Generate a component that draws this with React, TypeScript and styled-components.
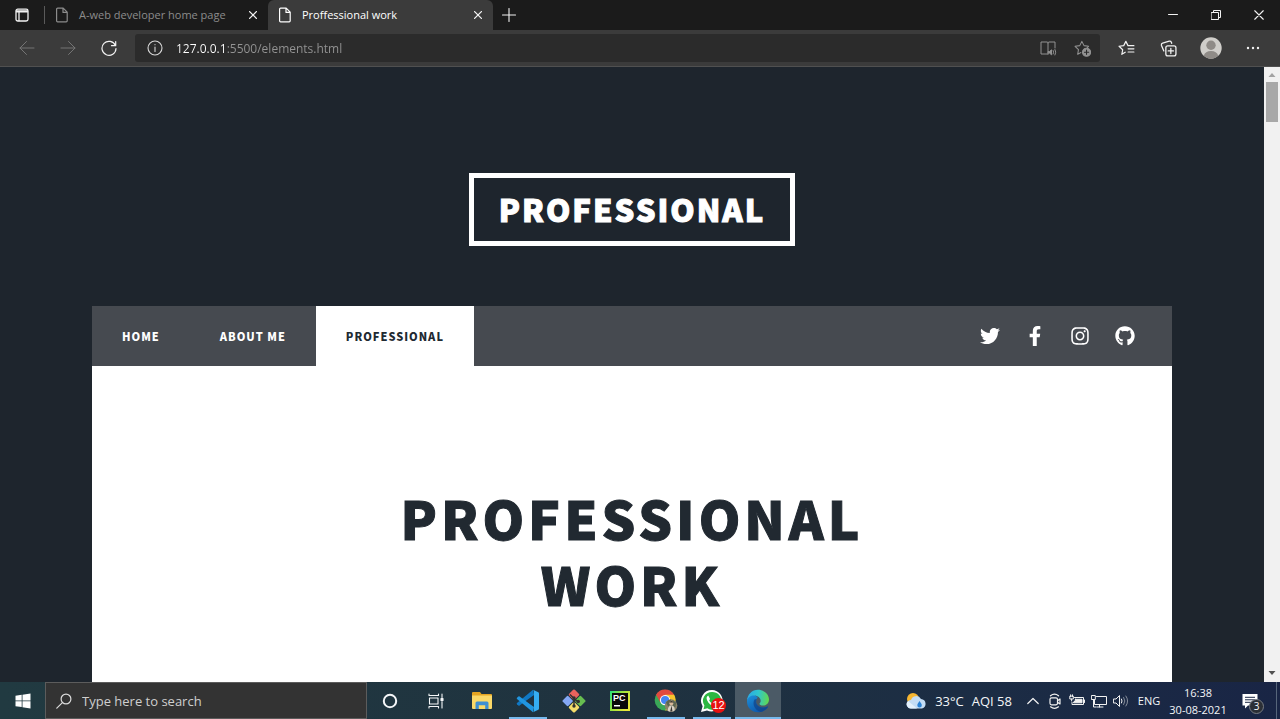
import React from "react";
import styled, { createGlobalStyle } from "styled-components";
import { FaTwitter, FaFacebookF, FaInstagram, FaGithub } from "react-icons/fa";

const GlobalStyle = createGlobalStyle`
  * { box-sizing: border-box; }
  body { margin: 0; background: #1e252d; }
  button, input { font: inherit; color: inherit; border: 0; padding: 0; margin: 0; background: none; }
  svg { display: block; flex: none; }
`;

const ui = `"Open Sans", "Noto Sans", sans-serif`;
const site = `"Noto Sans CJK JP", "Noto Sans CJK SC", sans-serif`;

const Screen = styled.div`
  display: flex;
  flex-direction: column;
  height: 100vh;
  font-family: ${ui};
  overflow: hidden;
`;

/* ---------- browser frame ---------- */

const TitleBar = styled.div`
  display: flex;
  flex: none;
  height: 30px;
  background: #1b1b1b;
  color: #f2f2f2;
`;

const IconButton = styled.button<{ $width: number; $color?: string }>`
  display: flex;
  align-items: center;
  justify-content: center;
  flex: none;
  width: ${(p) => p.$width}px;
  color: ${(p) => p.$color ?? "#f2f2f2"};
`;

const Divider = styled.span`
  width: 1px;
  height: 18px;
  margin-top: 6px;
  background: #5a5a5a;
`;

const Tab = styled.div<{ $active?: boolean }>`
  display: flex;
  align-items: center;
  flex: 0 1 ${(p) => (p.$active ? 225 : 223)}px;
  min-width: 0;
  padding-left: 9px;
  border-radius: 6px 6px 0 0;
  background: ${(p) => (p.$active ? "#3b3b3b" : "transparent")};
  color: ${(p) => (p.$active ? "#ffffff" : "#8c8c8c")};
`;

const TabLabel = styled.button`
  display: flex;
  align-items: center;
  gap: 9px;
  flex: 1;
  font-size: 11px;
  line-height: 16px;
  white-space: nowrap;
`;

const WindowButtons = styled.div`
  display: flex;
  margin-left: auto;
`;

const Toolbar = styled.div`
  display: flex;
  flex: none;
  height: 37px;
  padding: 0 6px;
  background: #3b3b3b;
  border-bottom: 1px solid #505050;
`;

const AddressBar = styled.div`
  display: flex;
  align-items: center;
  flex: 1;
  height: 28px;
  margin: 4px 6px 0;
  padding: 0 0 0 12px;
  border-radius: 3px;
  background: #2b2b2b;
`;

const AddressInput = styled.input`
  flex: 1;
  min-width: 0;
  height: 28px;
  margin-left: 13px;
  font-size: 12px;
  color: transparent;
  caret-color: #ffffff;
  background: linear-gradient(to right, #ffffff 51px, #949494 51px);
  background-clip: text;
  -webkit-background-clip: text;
  outline: none;
`;

/* ---------- web page ---------- */

const Viewport = styled.div`
  display: flex;
  flex: 1;
  min-height: 0;
`;

const Page = styled.div`
  flex: 1;
  min-width: 0;
  overflow: hidden;
  background: #1e252d;
  font-family: ${site};
  font-weight: 900;
`;

const Header = styled.header`
  display: flex;
  justify-content: center;
  padding: 106px 0 60px;
`;

const Logo = styled.a`
  padding: 15px 25px 17px;
  border: 5px solid #ffffff;
  color: #ffffff;
  font-size: 31px;
  line-height: 31px;
  letter-spacing: 2px;
  -webkit-text-stroke: 1px #ffffff;
  text-decoration: none;
`;

const Wrapper = styled.div`
  max-width: 1080px;
  margin: 0 auto;
`;

const Nav = styled.nav`
  display: flex;
  justify-content: space-between;
  height: 60px;
  background: #464a50;
`;

const LinkList = styled.ul`
  display: flex;
  margin: 0;
  padding: 0;
  list-style: none;
`;

const NavLink = styled.a<{ $active?: boolean }>`
  display: block;
  padding: 0 30px;
  font-size: 11px;
  line-height: 60px;
  letter-spacing: 1px;
  text-decoration: none;
  color: ${(p) => (p.$active ? "#212931" : "#ffffff")};
  background: ${(p) => (p.$active ? "#ffffff" : "transparent")};
`;

const SocialList = styled(LinkList)`
  padding-right: 25px;
`;

const SocialLink = styled.a`
  display: flex;
  align-items: center;
  justify-content: center;
  width: 45px;
  height: 60px;
  color: #ffffff;
  font-size: 20px;
`;

const Main = styled.main`
  padding: 118px 30px;
  min-height: 480px;
  background: #ffffff;
`;

const Heading = styled.h1`
  max-width: 540px;
  margin: 0 auto;
  color: #212931;
  font-size: 53px;
  font-weight: 900;
  line-height: 66px;
  letter-spacing: 4px;
  -webkit-text-stroke: 1px #212931;
  text-align: center;
`;

const ScrollTrack = styled.div`
  display: flex;
  flex-direction: column;
  align-items: center;
  flex: none;
  width: 16px;
  padding: 5px 0 6px;
  background: #f1f1f1;
`;

const ScrollThumb = styled.div`
  width: 12px;
  height: 40px;
  margin: 4px 0 auto;
  background: #a8a8a8;
`;

/* ---------- taskbar ---------- */

const Taskbar = styled.div`
  display: flex;
  flex: none;
  height: 37px;
  background: linear-gradient(to right, #213a41, #1f323f 50%, #1c2d44 75%, #192545);
  color: #f4f6f8;
`;

const SearchBox = styled.label`
  display: flex;
  align-items: center;
  gap: 10px;
  flex: 0 1 322px;
  min-width: 0;
  padding-left: 10px;
  border: 1px solid #5c5c5c;
  background: #333333;
  color: #dcdcdc;
`;

const SearchInput = styled.input`
  flex: 1;
  min-width: 0;
  height: 35px;
  font-size: 13px;
  outline: none;
  &::placeholder { color: #cfcfcf; opacity: 1; }
`;

const TaskButton = styled.button<{ $running?: boolean; $active?: boolean }>`
  display: flex;
  align-items: center;
  justify-content: center;
  position: relative;
  flex: none;
  width: 46px;
  background: ${(p) => (p.$active ? "#4b5a66" : "transparent")};
  &::after {
    content: "";
    position: absolute;
    bottom: 0;
    left: ${(p) => (p.$active ? 0 : 4)}px;
    right: ${(p) => (p.$active ? 0 : 4)}px;
    height: 2px;
    background: ${(p) => (p.$running ? "#76b9ed" : "transparent")};
  }
`;

const CountBadge = styled.span`
  position: absolute;
  left: 22px;
  top: 16px;
  width: 15px;
  height: 15px;
  border-radius: 50%;
  background: #e81010;
  color: #ffffff;
  font-family: "Liberation Sans", sans-serif;
  font-size: 11px;
  line-height: 15px;
  text-align: center;
`;

const Tray = styled.div`
  display: flex;
  margin-left: auto;
`;

const Weather = styled.button`
  display: flex;
  align-items: center;
  gap: 8px;
  margin-right: 10px;
  font-size: 13px;
  white-space: nowrap;
`;

const Language = styled.button`
  width: 34px;
  font-size: 11px;
`;

const Clock = styled.button`
  width: 64px;
  font-size: 11px;
  line-height: 17px;
  text-align: center;
  white-space: nowrap;
`;

const Notices = styled.button`
  display: flex;
  align-items: center;
  position: relative;
  width: 47px;
  padding-left: 12px;
  border-right: 1px solid #56657a;
  margin-right: 3px;
`;

const NoticeBadge = styled.span`
  position: absolute;
  left: 19px;
  top: 17px;
  width: 15px;
  height: 15px;
  border: 1px solid #777c84;
  border-radius: 50%;
  background: #2b2f36;
  font-size: 10px;
  line-height: 13px;
  text-align: center;
`;

/* ---------- icons ---------- */

type LineProps = { size: number; box?: string; width?: number; children: React.ReactNode };

const Line = ({ size, box = "0 0 16 16", width = 1, children }: LineProps) => (
  <svg
    width={size}
    height={size}
    viewBox={box}
    fill="none"
    stroke="currentColor"
    strokeWidth={width}
    strokeLinecap="round"
    strokeLinejoin="round"
    aria-hidden="true"
  >
    {children}
  </svg>
);

const PageIcon = () => (
  <Line size={16} width={1.2}>
    <path d="M3.6 1.2h5.6l4 4v8.6a1 1 0 0 1-1 1H3.6a1 1 0 0 1-1-1V2.200a1 1 0 0 1 1-1zM9 1.400v4h4" />
  </Line>
);

const CloseIcon = ({ size = 8 }: { size?: number }) => (
  <Line size={size} box="0 0 8 8" width={size > 8 ? 0.9 : 1.3}>
    <path d="M.6.6l6.800 6.800M7.400.6L.6 7.400" />
  </Line>
);

const EdgeIcon = () => (
  <svg width="24" height="24" viewBox="0 0 24 24" aria-hidden="true">
    <defs>
      <linearGradient id="edgeTop" x1="0" y1="0.4" x2="1" y2="0.5">
        <stop offset="0" stopColor="#2aa9e6" />
        <stop offset="0.5" stopColor="#30c6cc" />
        <stop offset="1" stopColor="#62d84e" />
      </linearGradient>
      <linearGradient id="edgeLow" x1="0" y1="0" x2="0.6" y2="1">
        <stop offset="0" stopColor="#1f93dc" />
        <stop offset="1" stopColor="#0d57ac" />
      </linearGradient>
    </defs>
    <path fill="url(#edgeLow)" d="M1 12.500C1 19 6 23.300 12 23.300c4.300 0 8-2 10-5.200.3-.5-.1-.8-.6-.6-4.400 2-9.400.6-10.900-2.700-1-2.400-.1-4.800 1.300-6.200L8 5.500C3.500 5.500 1 8.800 1 12.500z" />
    <path fill="#123f83" d="M8.500 10.500c-2.300 3.500-.6 11 6.300 12.400 3.100-.8 5.700-2.500 7.200-4.800.3-.5-.1-.8-.6-.6-4.400 2-9.400.6-10.900-2.700-.7-1.700-.4-3.500.2-4.700z" opacity=".65" />
    <path fill="url(#edgeTop)" d="M1 12C1.300 5.500 6 .8 12 .8c6.500 0 11 4.600 11 9.600 0 3.600-2.700 6.100-6 6.100-2.500 0-3.800-1-3.400-1.900.4-.8 1.100-1.400 1.100-2.800 0-2.800-2.800-5.300-6.700-5.300C4.600 6.500 1.700 8.500 1 12z" />
  </svg>
);

const ChromeIcon = () => (
  <svg width="24" height="26" viewBox="0 0 26 26" aria-hidden="true">
    <circle cx="12" cy="12" r="11.300" fill="#3aa757" />
    <path d="M12 12L2.200 6.350A11.300 11.300 0 0 1 21.800 6.350z" fill="#e04a3f" />
    <path d="M12 6.350h9.800A11.300 11.300 0 0 1 12 23.300l4.900-8.500z" fill="#f6c52d" />
    <path d="M2.200 6.350l4.900 8.500L12 6.350z" fill="#e04a3f" />
    <circle cx="12" cy="12" r="5.600" fill="#fff" />
    <circle cx="12" cy="12" r="4.400" fill="#4285f4" />
    <circle cx="18.500" cy="18" r="6.800" fill="#8a8168" />
    <path d="M13 14.500q2-3 5.500-3.300l-1 5-2 3zM20 12l4 3-1 5-3-2z" fill="#5c6650" />
    <circle cx="18.800" cy="15.500" r="2.100" fill="#d9b99b" />
    <path d="M14.800 23.500q.5-5.500 4-5.500t3.700 5q-3.500 3-7.700.5z" fill="#d8d2c6" />
    <path d="M17 14.500q1.800-3 3.900 0zM19 18l1 6.500-2.500-.2z" fill="#39352f" />
  </svg>
);

const WhatsappIcon = () => (
  <svg width="24" height="24" viewBox="0 0 24 24" aria-hidden="true">
    <path d="M12 1a11 10.700 0 0 0-9.400 16.200L1 23l6-1.600A11 10.700 0 1 0 12 1z" fill="#fff" />
    <path d="M12 2.900a9 8.900 0 0 0-7.600 13.700l-.9 3.700 3.900-1A9 8.900 0 1 0 12 2.900z" fill="#2cb742" />
    <path d="M8.200 6.500c-1.800.9-2 3-1 5 1.500 3.100 4 5.500 7.500 6.100 1.700.2 2.900-1 3-2.500l-2.900-1.500-1.500 1.600c-2-.8-3.300-2-4.200-3.900l1-1.400z" fill="#fff" />
  </svg>
);

const VsCodeIcon = () => (
  <svg width="24" height="24" viewBox="0 0 24 24" aria-hidden="true">
    <path d="M17 .8L18 6 3.600 16.600q-.6.400-1.200 0L1 15.300q-.6-.6 0-1.200z" fill="#0f78c4" />
    <path d="M17 23.300l1-5.300L3.600 7.400q-.6-.4-1.200 0L1 8.700q-.6.600 0 1.200z" fill="#2196e0" />
    <path d="M17 .7l5.300 2.600q.7.400.7 1.200v15q0 .8-.7 1.200L17 23.300q.9-.5.900-1.800v-19q0-1.300-.9-1.800z" fill="#35adf2" />
    <path d="M17.900 6.500L10.500 12l7.400 5.500z" fill="#1f323f" />
  </svg>
);

const GitIcon = () => (
  <svg width="24" height="24" viewBox="0 0 24 24" aria-hidden="true">
    <g transform="rotate(45 12 12)">
      <rect x="3.500" y="3.500" width="8" height="8" rx="1.200" fill="#e9635d" />
      <rect x="12.500" y="3.500" width="8" height="8" rx="1.200" fill="#67bd50" />
      <rect x="3.500" y="12.500" width="8" height="8" rx="1.200" fill="#85a8f4" />
      <rect x="12.500" y="12.500" width="8" height="8" rx="1.200" fill="#f4dc6a" />
    </g>
    <path d="M8 5.500l4 4v8M12 9.500l4 3.500" stroke="#30302f" strokeWidth="1.400" fill="none" />
    <circle cx="12" cy="9" r="1.700" fill="#30302f" />
    <circle cx="12" cy="17" r="1.700" fill="#30302f" />
    <circle cx="16.300" cy="12.500" r="1.700" fill="#30302f" />
  </svg>
);

const PyCharmIcon = () => (
  <svg width="22" height="22" viewBox="0 0 22 22" aria-hidden="true">
    <defs>
      <linearGradient id="pyEdge" x1="0" y1="0" x2="1" y2="0.6">
        <stop offset="0" stopColor="#21e07e" />
        <stop offset="0.5" stopColor="#9fe33c" />
        <stop offset="1" stopColor="#e8e93a" />
      </linearGradient>
    </defs>
    <path d="M1 1h20v20H1z" fill="url(#pyEdge)" />
    <path d="M3 3h16v16H3z" fill="#0a0a0a" />
    <text x="4" y="11" fill="#fff" fontFamily="Liberation Sans, sans-serif" fontWeight="700" fontSize="9">PC</text>
    <path d="M5 15h6v1.500H5z" fill="#fff" />
  </svg>
);

const FolderIcon = () => (
  <svg width="22" height="20" viewBox="0 0 22 20" aria-hidden="true">
    <path d="M1 2q0-1 1-1h7l1.500 2H20q1 0 1 1v3H1z" fill="#e5a522" />
    <path d="M1 4.500h20V17q0 1-1 1H2q-1 0-1-1z" fill="#fbd968" />
    <path d="M4.500 18v-6q0-1.500 1.500-1.500h10q1.500 0 1.500 1.500v6h-3.300v-3.700H7.800V18z" fill="#3f8fd2" />
  </svg>
);

const WeatherIcon = () => (
  <svg width="21" height="18" viewBox="0 0 21 18" aria-hidden="true">
    <circle cx="7" cy="7" r="6" fill="#f7b731" />
    <path d="M5 16.500a4.300 4.300 0 0 1 0-8.600 5.500 5.500 0 0 1 10-1A4.900 4.900 0 0 1 16 16.500z" fill="#c4ddf5" />
    <path d="M5 16.500a4.300 4.300 0 0 1-3-7.500q5 4 9 7.500z" fill="#e4f1fc" />
    <path d="M13.500 9q2.300 3 2.300 4.300a2.200 2.200 0 0 1-4.500 0q0-1.300 2.200-4.300z" fill="#2b83d6" />
  </svg>
);

const socials = [
  { name: "Twitter", Icon: FaTwitter },
  { name: "Facebook", Icon: FaFacebookF },
  { name: "Instagram", Icon: FaInstagram },
  { name: "GitHub", Icon: FaGithub },
];

const links = ["HOME", "ABOUT ME", "PROFESSIONAL"];

export default function App() {
  return (
    <Screen>
      <GlobalStyle />
      <TitleBar>
        <IconButton $width={44} aria-label="Tab actions">
          <Line size={16} width={1.3}>
            <rect x="2" y="2.200" width="12" height="11.800" rx="1.800" />
            <path d="M2.500 3.800h11M2.500 4.800h11M5 5v8.500" />
          </Line>
        </IconButton>
        <Divider />
        <Tab>
          <TabLabel><PageIcon />A-web developer home page</TabLabel>
          <IconButton $width={30} aria-label="Close tab"><CloseIcon /></IconButton>
        </Tab>
        <Tab $active>
          <TabLabel><PageIcon />Proffessional work</TabLabel>
          <IconButton $width={30} aria-label="Close tab"><CloseIcon /></IconButton>
        </Tab>
        <IconButton $width={32} aria-label="New tab">
          <Line size={14} box="0 0 14 14" width={1.1}><path d="M7 .5v13M.5 7h13" /></Line>
        </IconButton>
        <WindowButtons>
          <IconButton $width={43} aria-label="Minimize">
            <Line size={10} box="0 0 10 10"><path d="M.5 4.500h9" /></Line>
          </IconButton>
          <IconButton $width={43} aria-label="Restore">
            <Line size={10} box="0 0 10 10"><path d="M.5 2.500h7v7h-7zM2.500 2.300V.5h7v7H7.700" /></Line>
          </IconButton>
          <IconButton $width={43} aria-label="Close"><CloseIcon size={10} /></IconButton>
        </WindowButtons>
      </TitleBar>

      <Toolbar>
        <IconButton $width={41} $color="#757575" aria-label="Back">
          <Line size={16}><path d="M15 8H1M7.500 1.500L1 8l6.500 6.500" /></Line>
        </IconButton>
        <IconButton $width={41} $color="#757575" aria-label="Forward">
          <Line size={16}><path d="M1 8h14M8.500 1.500L15 8l-6.500 6.500" /></Line>
        </IconButton>
        <IconButton $width={41} aria-label="Refresh">
          <Line size={16} width={1.2}><path d="M14.400 5.500A7 7 0 1 0 15 8.500M14.700 1.500v4.200h-4.200" /></Line>
        </IconButton>
        <AddressBar>
          <Line size={16} width={1.100}>
            <path d="M8 7v4.500M8 4.500v.3" stroke="#d8d8d8" />
            <circle cx="8" cy="8" r="7" stroke="#d8d8d8" />
          </Line>
          <AddressInput aria-label="Address" defaultValue="127.0.0.1:5500/elements.html" />
          <IconButton $width={34} $color="#929292" aria-label="Immersive reader">
            <Line size={17} box="0 0 17 17">
              <path d="M8 14H1V2h6q1 0 1 1v11M8 3q0-1 1-1h6v6" />
              <path d="M8.500 11.500h1l2-1.700v5l-2-1.700h-1z" fill="currentColor" />
              <path d="M13.200 10.500q1 1.700 0 3.500M15 9.500q1.600 2.700 0 5.500" />
            </Line>
          </IconButton>
          <IconButton $width={35} $color="#929292" aria-label="Add to favorites">
            <Line size={17}>
              <path d="M6.500 11.800L3.500 13.500l.7-4.400L1 5.900l4.400-.6 2-4 2 4 4.300.6-1.400 1.400" />
              <circle cx="11.800" cy="11.500" r="3.800" fill="currentColor" />
              <path d="M11.800 9.500v4M9.800 11.500h4" stroke="#2b2b2b" />
            </Line>
          </IconButton>
        </AddressBar>
        <IconButton $width={41} aria-label="Favorites">
          <Line size={17} width={1.1}>
            <path d="M6.800 11.500l-3.200 2 .8-4.300L1 5.900l4.400-.6 2-4 2 4 M9.400 5.300H15M9.500 8.300H15M9.500 11.300H15" />
          </Line>
        </IconButton>
        <IconButton $width={42} aria-label="Collections">
          <Line size={17} width={1.2}>
            <rect x="5.500" y="5.500" width="9.500" height="9.500" rx="1.800" />
            <path d="M10.200 7.800v5M7.700 10.300h5M3.600 10.300L1.300 4.900Q1 3.500 2.500 3L8.700 1.100q1.400-.3 2 1l.3 1" />
          </Line>
        </IconButton>
        <IconButton $width={43} aria-label="Profile">
          <svg width="22" height="22" viewBox="0 0 22 22" aria-hidden="true">
            <circle cx="11" cy="11" r="10.700" fill="#d0ceca" />
            <circle cx="11" cy="8.200" r="4.700" fill="#8f8b87" />
            <path d="M3.800 18.500q1.500-4.500 7.200-4.500t7.200 4.500q-3 3.200-7.200 3.200t-7.200-3.200z" fill="#8f8b87" />
          </svg>
        </IconButton>
        <IconButton $width={42} aria-label="Settings and more">
          <svg width="14" height="4" viewBox="0 0 14 4" fill="currentColor" aria-hidden="true">
            <circle cx="2" cy="2" r="1.200" /><circle cx="7" cy="2" r="1.200" /><circle cx="12" cy="2" r="1.200" />
          </svg>
        </IconButton>
      </Toolbar>

      <Viewport>
        <Page>
          <Header><Logo href="#">PROFESSIONAL</Logo></Header>
          <Wrapper>
            <Nav>
              <LinkList>
                {links.map((label, i) => (
                  <li key={label}><NavLink href="#" $active={i === 2}>{label}</NavLink></li>
                ))}
              </LinkList>
              <SocialList>
                {socials.map(({ name, Icon }) => (
                  <li key={name}><SocialLink href="#" aria-label={name}><Icon /></SocialLink></li>
                ))}
              </SocialList>
            </Nav>
            <Main>
              <Heading>PROFESSIONAL WORK</Heading>
            </Main>
          </Wrapper>
        </Page>
        <ScrollTrack>
          <svg width="8" height="6" viewBox="0 0 8 6" aria-hidden="true"><path d="M.5 5L4 1l3.500 4z" fill="#a3a3a3" /></svg>
          <ScrollThumb />
          <svg width="8" height="6" viewBox="0 0 8 6" aria-hidden="true"><path d="M.5 1L4 5l3.500-4z" fill="#505050" /></svg>
        </ScrollTrack>
      </Viewport>

      <Taskbar>
        <IconButton $width={45} aria-label="Start">
          <svg width="16" height="16" viewBox="0 0 16 16" fill="#fff" aria-hidden="true">
            <path d="M.5 2.700L6.700 1.800v5.700H.5zM7.500 1.700L15.500.5v7h-8zM.5 8.300h6.200V14L.5 13.200zM7.500 8.300h8v7.200l-8-1.200z" />
          </svg>
        </IconButton>
        <SearchBox>
          <Line size={16} width={1.200}><circle cx="10" cy="6" r="4.900" /><path d="M6.400 9.600L.8 15.200" /></Line>
          <SearchInput type="text" aria-label="Search" placeholder="Type here to search" />
        </SearchBox>
        <TaskButton aria-label="Cortana">
          <Line size={16} width={2}><circle cx="8" cy="8" r="6.200" /></Line>
        </TaskButton>
        <TaskButton aria-label="Task view">
          <Line size={16} width={1.100}>
            <path d="M1 1v1.500h9.500V1M1 15v-1.500h9.500V15M1.500 5h8.500v6H1.500zM14 1v3.500M14 8.500V15" />
            <path d="M13 5.500h2v2h-2z" fill="currentColor" />
          </Line>
        </TaskButton>
        <TaskButton aria-label="File Explorer"><FolderIcon /></TaskButton>
        <TaskButton $running aria-label="Visual Studio Code"><VsCodeIcon /></TaskButton>
        <TaskButton aria-label="Git"><GitIcon /></TaskButton>
        <TaskButton aria-label="PyCharm"><PyCharmIcon /></TaskButton>
        <TaskButton $running aria-label="Chrome"><ChromeIcon /></TaskButton>
        <TaskButton $running aria-label="WhatsApp"><WhatsappIcon /><CountBadge>12</CountBadge></TaskButton>
        <TaskButton $running $active aria-label="Edge"><EdgeIcon /></TaskButton>
        <Tray>
          <Weather><WeatherIcon /><span>33°C</span><span>AQI 58</span></Weather>
          <IconButton $width={22} aria-label="Show hidden icons">
            <Line size={12} box="0 0 12 12" width={1.200}><path d="M.8 8.500L6 3.500l5.200 5" /></Line>
          </IconButton>
          <IconButton $width={22} aria-label="Meet now">
            <Line size={16} width={1.200}>
              <rect x="3" y="4.800" width="7.500" height="7" rx="1.500" />
              <path d="M10.800 7.500L13 6v5l-2.200-1.500M3.500 2.800Q7.500-.5 11.500 2.800M3.500 13.800q4 3 8 0" />
            </Line>
          </IconButton>
          <IconButton $width={22} aria-label="Battery">
            <Line size={16}>
              <path d="M5.500 4.500h9v7H3V9.500M15.500 7v2.500M.8 3.500v2.500h3.500V3.500zM1.600 1.800V3.500M3.500 1.800V3.500M2.600 6v2" />
              <path d="M6.500 6.300h6.500v3.500H4.500V9q2 0 2-2.700z" fill="currentColor" />
            </Line>
          </IconButton>
          <IconButton $width={22} aria-label="Network">
            <Line size={16}><path d="M5.500 3.500h10v8h-12V7M8.500 11.500V14M6 14h6M.8 2.500h3.500v4H.8zM2.500 6.500V14H5" /></Line>
          </IconButton>
          <IconButton $width={22} aria-label="Volume">
            <Line size={16}>
              <path d="M.8 6h2.200l3.500-3.500v11L3 10H.8zM8.500 6q1.200 2 0 4" />
              <path d="M10.700 4.500q2.500 3.500 0 7M12.900 3q3.500 5 0 10" opacity=".5" />
            </Line>
          </IconButton>
          <Language>ENG</Language>
          <Clock>16:38<br />30-08-2021</Clock>
          <Notices aria-label="Notifications">
            <svg width="16" height="16" viewBox="0 0 16 16" aria-hidden="true">
              <path d="M.5 1h15v11.500H6L3 15.500v-3H.5z" fill="#fff" />
              <path d="M3 4.300h10M3 6.800h10M3 9.300h6" stroke="#1b2744" />
            </svg>
            <NoticeBadge>3</NoticeBadge>
          </Notices>
        </Tray>
      </Taskbar>
    </Screen>
  );
}
